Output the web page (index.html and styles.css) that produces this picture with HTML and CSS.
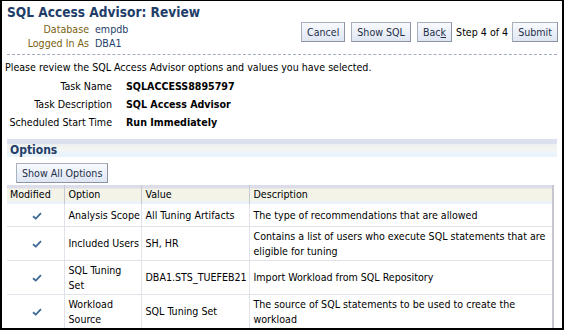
FILE: index.html
```html
<!DOCTYPE html>
<html>
<head>
<meta charset="utf-8">
<link rel="stylesheet" href="styles.css">
</head>
<body>
<div class="frame">
  <div class="header">
    <div class="title-block">
      <h1 class="title">SQL Access Advisor: Review</h1>
      <div class="info">
        <span class="info-label">Database</span><span class="info-value">empdb</span>
        <span class="info-label">Logged In As</span><span class="info-value">DBA1</span>
      </div>
    </div>
    <div class="actions">
      <button class="btn">Cancel</button>
      <button class="btn">Show SQL</button>
      <button class="btn">Bac<u>k</u></button>
      <span class="step">Step 4 of 4</span>
      <button class="btn">Submit</button>
    </div>
  </div>
  <div class="dash"></div>
  <p class="intro">Please review the SQL Access Advisor options and values you have selected.</p>
  <div class="summary">
    <span class="s-label">Task Name</span><span class="s-value">SQLACCESS8895797</span>
    <span class="s-label">Task Description</span><span class="s-value">SQL Access Advisor</span>
    <span class="s-label">Scheduled Start Time</span><span class="s-value">Run Immediately</span>
  </div>
  <div class="section">
    <div class="section-top"></div>
    <div class="section-title">Options</div>
  </div>
  <div class="opt-actions"><button class="btn">Show All Options</button></div>
  <table class="grid">
    <colgroup>
      <col class="w-mod"><col class="w-opt"><col class="w-val"><col>
    </colgroup>
    <thead>
      <tr><th>Modified</th><th>Option</th><th>Value</th><th>Description</th></tr>
    </thead>
    <tbody>
      <tr class="r1"><td class="check"><svg width="10" height="8" viewBox="0 0 10 8"><path d="M1 4.2 L3.8 6.6 L9 1.2" fill="none" stroke="#3c6896" stroke-width="1.8"/></svg></td><td>Analysis Scope</td><td>All Tuning Artifacts</td><td>The type of recommendations that are allowed</td></tr>
      <tr class="r2"><td class="check"><svg width="10" height="8" viewBox="0 0 10 8"><path d="M1 4.2 L3.8 6.6 L9 1.2" fill="none" stroke="#3c6896" stroke-width="1.8"/></svg></td><td>Included Users</td><td>SH, HR</td><td>Contains a list of users who execute SQL statements that are eligible for tuning</td></tr>
      <tr class="r2"><td class="check"><svg width="10" height="8" viewBox="0 0 10 8"><path d="M1 4.2 L3.8 6.6 L9 1.2" fill="none" stroke="#3c6896" stroke-width="1.8"/></svg></td><td>SQL Tuning<br>Set</td><td>DBA1.STS_TUEFEB21</td><td>Import Workload from SQL Repository</td></tr>
      <tr class="r2"><td class="check"><svg width="10" height="8" viewBox="0 0 10 8"><path d="M1 4.2 L3.8 6.6 L9 1.2" fill="none" stroke="#3c6896" stroke-width="1.8"/></svg></td><td>Workload<br>Source</td><td>SQL Tuning Set</td><td>The source of SQL statements to be used to create the workload</td></tr>
    </tbody>
  </table>
</div>
</body>
</html>
```
FILE: styles.css
```css
html, body {
  margin: 0;
  padding: 0;
  background: #fff;
}
body {
  font-family: Tahoma, "DejaVu Sans Condensed", "Liberation Sans", sans-serif;
  font-size: 10.6px;
  color: #000;
}
.frame {
  width: 564px;
  height: 330px;
  box-sizing: border-box;
  border-top: 1px solid #000;
  border-left: 2px solid #000;
  border-right: 2px solid #000;
  border-bottom: 2px solid #000;
  overflow: hidden;
  padding: 0 3px 0 3px;
}
.header {
  display: flex;
  justify-content: space-between;
  align-items: flex-start;
}
.title {
  margin: 3px 0 0 2px;
  font-size: 13.6px;
  font-weight: bold;
  color: #1f3e6a;
  line-height: 17px;
}
.info {
  display: grid;
  grid-template-columns: 84px auto;
  column-gap: 6px;
  line-height: 14px;
  margin-top: 1px;
}
.info-label {
  text-align: right;
  color: #7a5f10;
}
.info-value {
  color: #1f3e6a;
}
.actions {
  display: flex;
  align-items: center;
  gap: 6px;
  margin-top: 21px;
  margin-right: 1px;
}
.btn {
  font-family: inherit;
  font-size: 10.6px;
  color: #1f2f4a;
  height: 20px;
  padding: 0 5px;
  border: 1px solid #a9b0bd;
  border-right-color: #8c94a3;
  border-bottom-color: #8c94a3;
  background: linear-gradient(#f8fafd, #dfe6f3);
  line-height: 18px;
}
.btn u { text-decoration: underline; }
.step {
  color: #000;
  margin: 0 -2px;
}
.dash {
  margin: 4px 2px 0 2px;
  border-top: 1px dashed #a3acc4;
}
.intro {
  margin: 5px 0 0 0;
  line-height: 15px;
}
.summary {
  display: grid;
  grid-template-columns: 107px auto;
  column-gap: 14px;
  row-gap: 3px;
  margin-top: 4px;
  line-height: 15px;
}
.s-label { text-align: right; }
.s-value { font-weight: bold; }
.section {
  margin: 9px 2px 0 2px;
}
.section-top {
  height: 5px;
  background: #dde0ee;
}
.section-title {
  font-weight: bold;
  font-size: 12px;
  color: #1f3e6a;
  line-height: 13px;
  padding: 0 0 0 3px;
  background: linear-gradient(#eef0f0 0px, #f4f6f2 6px, #eaf4fb 9px, #eaf4fb 13px);
  height: 13px;
}
.opt-actions {
  margin: 6px 0 0 11px;
}
.grid {
  border-collapse: collapse;
  table-layout: fixed;
  margin: 2px 0 0 2px;
  width: 547px;
  border-right: 2px solid #c7c7cf;
}
.w-mod { width: 57px; }
.w-opt { width: 77px; }
.w-val { width: 108px; }
.grid th {
  font-weight: normal;
  text-align: left;
  height: 19px;
  padding: 0 1px 0 4px;
  background: linear-gradient(#dddce9 0, #dddce9 3px, #f3f3e8 4px, #f3f3e8 15px, #eaf3fb 18px);
  border-left: 1px solid #c8c8d0;
  line-height: 15px;
}
.grid th:first-child { border-left: none; padding-left: 3px; }
.grid td {
  border-top: 1px solid #e2e2ea;
  border-left: 1px solid #e2e2ea;
  padding: 0 1px 0 4px;
  line-height: 15px;
  vertical-align: middle;
  white-space: normal;
}
.grid td:nth-child(2) { white-space: nowrap; }
.grid td:first-child { border-left: none; }
.grid tbody tr:first-child td { border-top: none; }
.r1 td { height: 22px; }
.r2 td { height: 33px; }
.check {
  text-align: center;
}
.check svg { display: inline-block; vertical-align: middle; }
```
